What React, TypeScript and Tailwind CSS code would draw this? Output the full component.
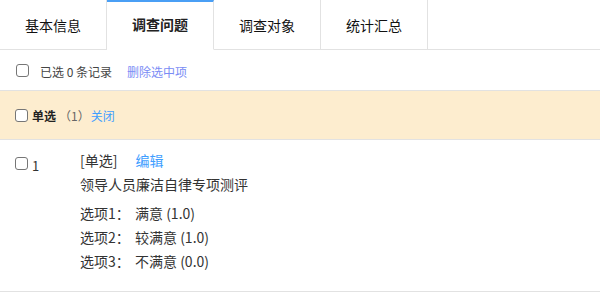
import React from "react";

const font = { fontFamily: '"Noto Sans CJK SC", "Noto Sans", sans-serif' };

function Box() {
  return (
    <span className="inline-block w-[13px] h-[13px] rounded-[3px] border border-[#767676] bg-white shrink-0" />
  );
}

export default function App() {
  const tabs = ["基本信息", "调查问题", "调查对象", "统计汇总"];
  const options = [
    ["选项1：", "满意 (1.0)"],
    ["选项2：", "较满意 (1.0)"],
    ["选项3：", "不满意 (0.0)"],
  ];
  return (
    <div className="w-[600px] h-[297px] bg-white text-[#333] overflow-hidden" style={font}>
      <div className="flex h-[50px] border-b border-[#e2e2e2]">
        {tabs.map((t, i) => (
          <div
            key={t}
            className={
              "w-[107px] h-[50px] -mb-px flex items-center justify-center text-[14px] border-r border-[#e2e2e2] " +
              (i === 1
                ? "border-t-2 border-t-[#4a9ff5] border-b border-b-white font-bold text-[#222] pb-[2px]"
                : "text-[#111]")
            }
          >
            {t}
          </div>
        ))}
      </div>
      <div className="h-[41px] flex items-center pl-[16px] text-[12px] border-b border-[#e2e2e2]">
        <Box />
        <span className="ml-[11px] mt-[3px] text-[#444]">已选 0 条记录</span>
        <span className="ml-[15px] mt-[3px] text-[#7a8cf5]">删除选中项</span>
      </div>
      <div className="h-[49px] bg-[#fdedcf] flex items-center pl-[15px] text-[12px] border-b border-[#e2e2e2]">
        <Box />
        <span className="ml-[4px] mt-[2px] font-bold text-[#222]">单选</span>
        <span className="ml-[3px] mt-[2px] text-[#666]">（1）</span>
        <span className="ml-[1px] mt-[2px] text-[#409eff]">关闭</span>
      </div>
      <div className="flex pt-[8px] pb-[18px] border-b border-[#e2e2e2] text-[14px]">
        <div className="w-[80px] flex items-start pl-[15px] pt-[9px]">
          <Box />
          <span className="ml-[4px] text-[13px] leading-[14px] mt-[2px]">1</span>
        </div>
        <div className="flex flex-col leading-[24px]">
          <div className="flex">
            <span className="text-[#333]">[单选]</span>
            <span className="ml-[18px] text-[#409eff]">编辑</span>
          </div>
          <div>领导人员廉洁自律专项测评</div>
          <div className="mt-[5px] flex flex-col">
            {options.map(([a, b]) => (
              <div key={a} className="flex">
                <span className="w-[55px]">{a}</span>
                <span>{b}</span>
              </div>
            ))}
          </div>
        </div>
      </div>
    </div>
  );
}
